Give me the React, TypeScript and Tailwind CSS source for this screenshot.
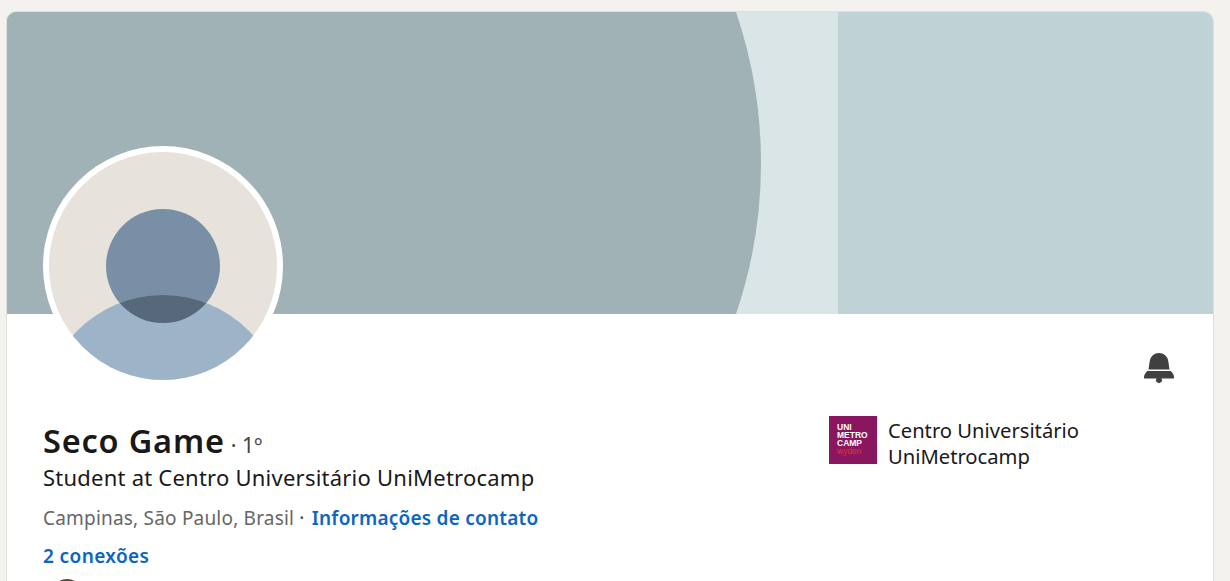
export default function App() {
  return (
    <div className="h-[581px] overflow-hidden bg-[#f4f2ee] pt-[11px] pl-[6px] pr-[16px] font-['Noto_Sans',sans-serif]">
      <section className="relative h-[700px] rounded-[10px] border border-[#e0dfdc] bg-white">
        <svg className="block h-[302px] w-full rounded-t-[9px]" viewBox="0 0 1206 302" preserveAspectRatio="none">
          <rect width="1206" height="302" fill="#bfd2d6" />
          <rect x="720" width="111" height="302" fill="#d9e5e7" />
          <path d="M0 0H729A468.5 468.5 0 0 1 729 302H0Z" fill="#a0b2b6" />
        </svg>

        <div className="absolute left-[36px] top-[134px] h-[240px] w-[240px] rounded-full bg-white p-[6px]">
          <svg viewBox="0 0 228 228" className="block h-[228px] w-[228px]">
            <defs>
              <clipPath id="face"><circle cx="114" cy="114" r="114" /></clipPath>
              <clipPath id="head"><circle cx="114" cy="114" r="57" /></clipPath>
            </defs>
            <circle cx="114" cy="114" r="114" fill="#e7e2dc" />
            <circle cx="114" cy="114" r="57" fill="#788fa5" />
            <g clipPath="url(#face)"><circle cx="114" cy="264" r="121" fill="#9db3c8" /></g>
            <g clipPath="url(#head)"><circle cx="114" cy="264" r="121" fill="#56687a" /></g>
          </svg>
        </div>

        <div className="flex h-[101px] items-start justify-end pr-[36px] pt-[36px]">
          <svg viewBox="0 0 24 24" className="h-[36px] w-[36px]" fill="#404040">
            <path d="M22 19h-8.28a2 2 0 11-3.44 0H2v-1a4.52 4.52 0 011.17-2.83l1-1.17h15.7l1 1.17A4.52 4.52 0 0122 18zM18.21 7.44A6.27 6.27 0 0012 2a6.27 6.27 0 00-6.21 5.44L5 13h14z" />
          </svg>
        </div>

        <div className="flex items-start justify-between pl-[36px]">
          <div className="pt-[5px]">
            <h1 className="flex items-baseline text-[32.5px] font-semibold leading-[42px] tracking-[0.8px] text-[#191919]">
              Seco Game
              <span className="ml-[6px] text-[21.3px] font-normal leading-none tracking-normal text-[#444444]">· 1º</span>
            </h1>
            <p className="mt-[1px] text-[22px] leading-[28px] tracking-[0.23px] text-[#191919]">Student at Centro Universitário UniMetrocamp</p>
            <p className="mt-[13px] text-[19px] leading-[28px] tracking-[0.2px] text-[#666666]">
              Campinas, São Paulo, Brasil <span className="text-[#444444]">·</span>{" "}
              <a className="ml-[2px] font-semibold tracking-[0.22px] text-[#0a66c2]">Informações de contato</a>
            </p>
            <p className="mt-[10px] text-[19px] font-semibold leading-[28px] tracking-[0.4px] text-[#0a66c2]">2 conexões</p>
            <div className="ml-[8px] mt-[9px] h-[32px] w-[32px] rounded-full bg-[#5c4a2e]" />
          </div>

          <div className="mr-[86px] flex w-[299px] items-start gap-[12px] pl-[1px] pt-[1px]">
            <div className="flex h-[48px] w-[48px] shrink-0 flex-col bg-[#8a1660] pl-[8px] pt-[7px] font-['Liberation_Sans',sans-serif] text-[8.5px] font-bold leading-[8px] text-white">
              <span>UNI</span>
              <span>METRO</span>
              <span>CAMP</span>
              <span className="text-[8.5px] font-normal leading-[9px] text-[#e0352f]">wyden</span>
            </div>
            <p className="-ml-[1px] pt-[1px] text-[20.2px] leading-[26px] text-[#191919]">Centro Universitário<br />UniMetrocamp</p>
          </div>
        </div>
      </section>
    </div>
  );
}
